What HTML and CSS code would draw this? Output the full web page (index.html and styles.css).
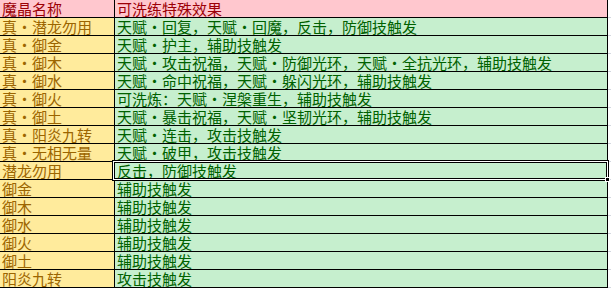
FILE: index.html
```html
<!DOCTYPE html>
<html lang="zh-CN">
<head>
<meta charset="utf-8">
<title>魔晶特殊效果</title>
<link rel="stylesheet" href="styles.css">
</head>
<body>
<div class="sheet">
  <div class="table">
    <div class="cell head">魔晶名称</div>
    <div class="cell head wide">可洗练特殊效果</div>

    <div class="cell name">真<span class="dot">•</span>潜龙勿用</div>
    <div class="cell eff">天赋<span class="dot">•</span>回复，天赋<span class="dot">•</span>回魔，反击，防御技触发</div>

    <div class="cell name">真<span class="dot">•</span>御金</div>
    <div class="cell eff">天赋<span class="dot">•</span>护主，辅助技触发</div>

    <div class="cell name">真<span class="dot">•</span>御木</div>
    <div class="cell eff">天赋<span class="dot">•</span>攻击祝福，天赋<span class="dot">•</span>防御光环，天赋<span class="dot">•</span>全抗光环，辅助技触发</div>

    <div class="cell name">真<span class="dot">•</span>御水</div>
    <div class="cell eff">天赋<span class="dot">•</span>命中祝福，天赋<span class="dot">•</span>躲闪光环，辅助技触发</div>

    <div class="cell name">真<span class="dot">•</span>御火</div>
    <div class="cell eff">可洗炼：天赋<span class="dot">•</span>涅槃重生，辅助技触发</div>

    <div class="cell name">真<span class="dot">•</span>御土</div>
    <div class="cell eff">天赋<span class="dot">•</span>暴击祝福，天赋<span class="dot">•</span>坚韧光环，辅助技触发</div>

    <div class="cell name">真<span class="dot">•</span>阳炎九转</div>
    <div class="cell eff">天赋<span class="dot">•</span>连击，攻击技触发</div>

    <div class="cell name">真<span class="dot">•</span>无相无量</div>
    <div class="cell eff">天赋<span class="dot">•</span>破甲，攻击技触发</div>

    <div class="cell name">潜龙勿用</div>
    <div class="cell eff active">反击，防御技触发<span class="sel"></span><span class="handle"></span></div>

    <div class="cell name">御金</div>
    <div class="cell eff">辅助技触发</div>

    <div class="cell name">御木</div>
    <div class="cell eff">辅助技触发</div>

    <div class="cell name">御水</div>
    <div class="cell eff">辅助技触发</div>

    <div class="cell name">御火</div>
    <div class="cell eff">辅助技触发</div>

    <div class="cell name">御土</div>
    <div class="cell eff">辅助技触发</div>

    <div class="cell name">阳炎九转</div>
    <div class="cell eff">攻击技触发</div>
  </div>
  <div class="gutter"></div>
</div>
</body>
</html>
```

FILE: styles.css
```css
html, body {
  margin: 0;
  padding: 0;
  background: #ffffff;
}

body {
  font-family: "Noto Sans CJK SC", "Noto Sans", sans-serif;
  font-size: 15px;
}

.sheet {
  display: flex;
  width: 611px;
  height: 288px;
  overflow: hidden;
}

.table {
  display: grid;
  grid-template-columns: 115px 493px;
  grid-auto-rows: 18px;
  width: 608px;
  flex: none;
}

.gutter {
  flex: 1;
  background: repeating-linear-gradient(to bottom, transparent 0 17px, #d4d8e0 17px 18px);
}

.cell {
  box-sizing: border-box;
  border-bottom: 1px solid #000;
  border-right: 1px solid #000;
  padding-left: 2px;
  line-height: 17px;
  white-space: nowrap;
}

.head {
  background: #ffc7ce;
  color: #9c0006;
}

.name {
  background: #ffeb9c;
  color: #9c6500;
}

.eff {
  background: #c6efce;
  color: #006100;
}

.dot {
  display: inline-block;
  width: 1em;
  text-align: center;
}

.active {
  position: relative;
}

.sel {
  position: absolute;
  left: -3px;
  top: -2px;
  right: -2px;
  bottom: -2px;
  border: 1px solid #000;
  box-shadow: inset 0 0 0 1px #fff, inset 0 0 0 2px #000;
  pointer-events: none;
}

.handle {
  position: absolute;
  right: -3px;
  bottom: -3px;
  width: 5px;
  height: 5px;
  box-sizing: border-box;
  background: #000;
  border: 1px solid #fff;
}
```
